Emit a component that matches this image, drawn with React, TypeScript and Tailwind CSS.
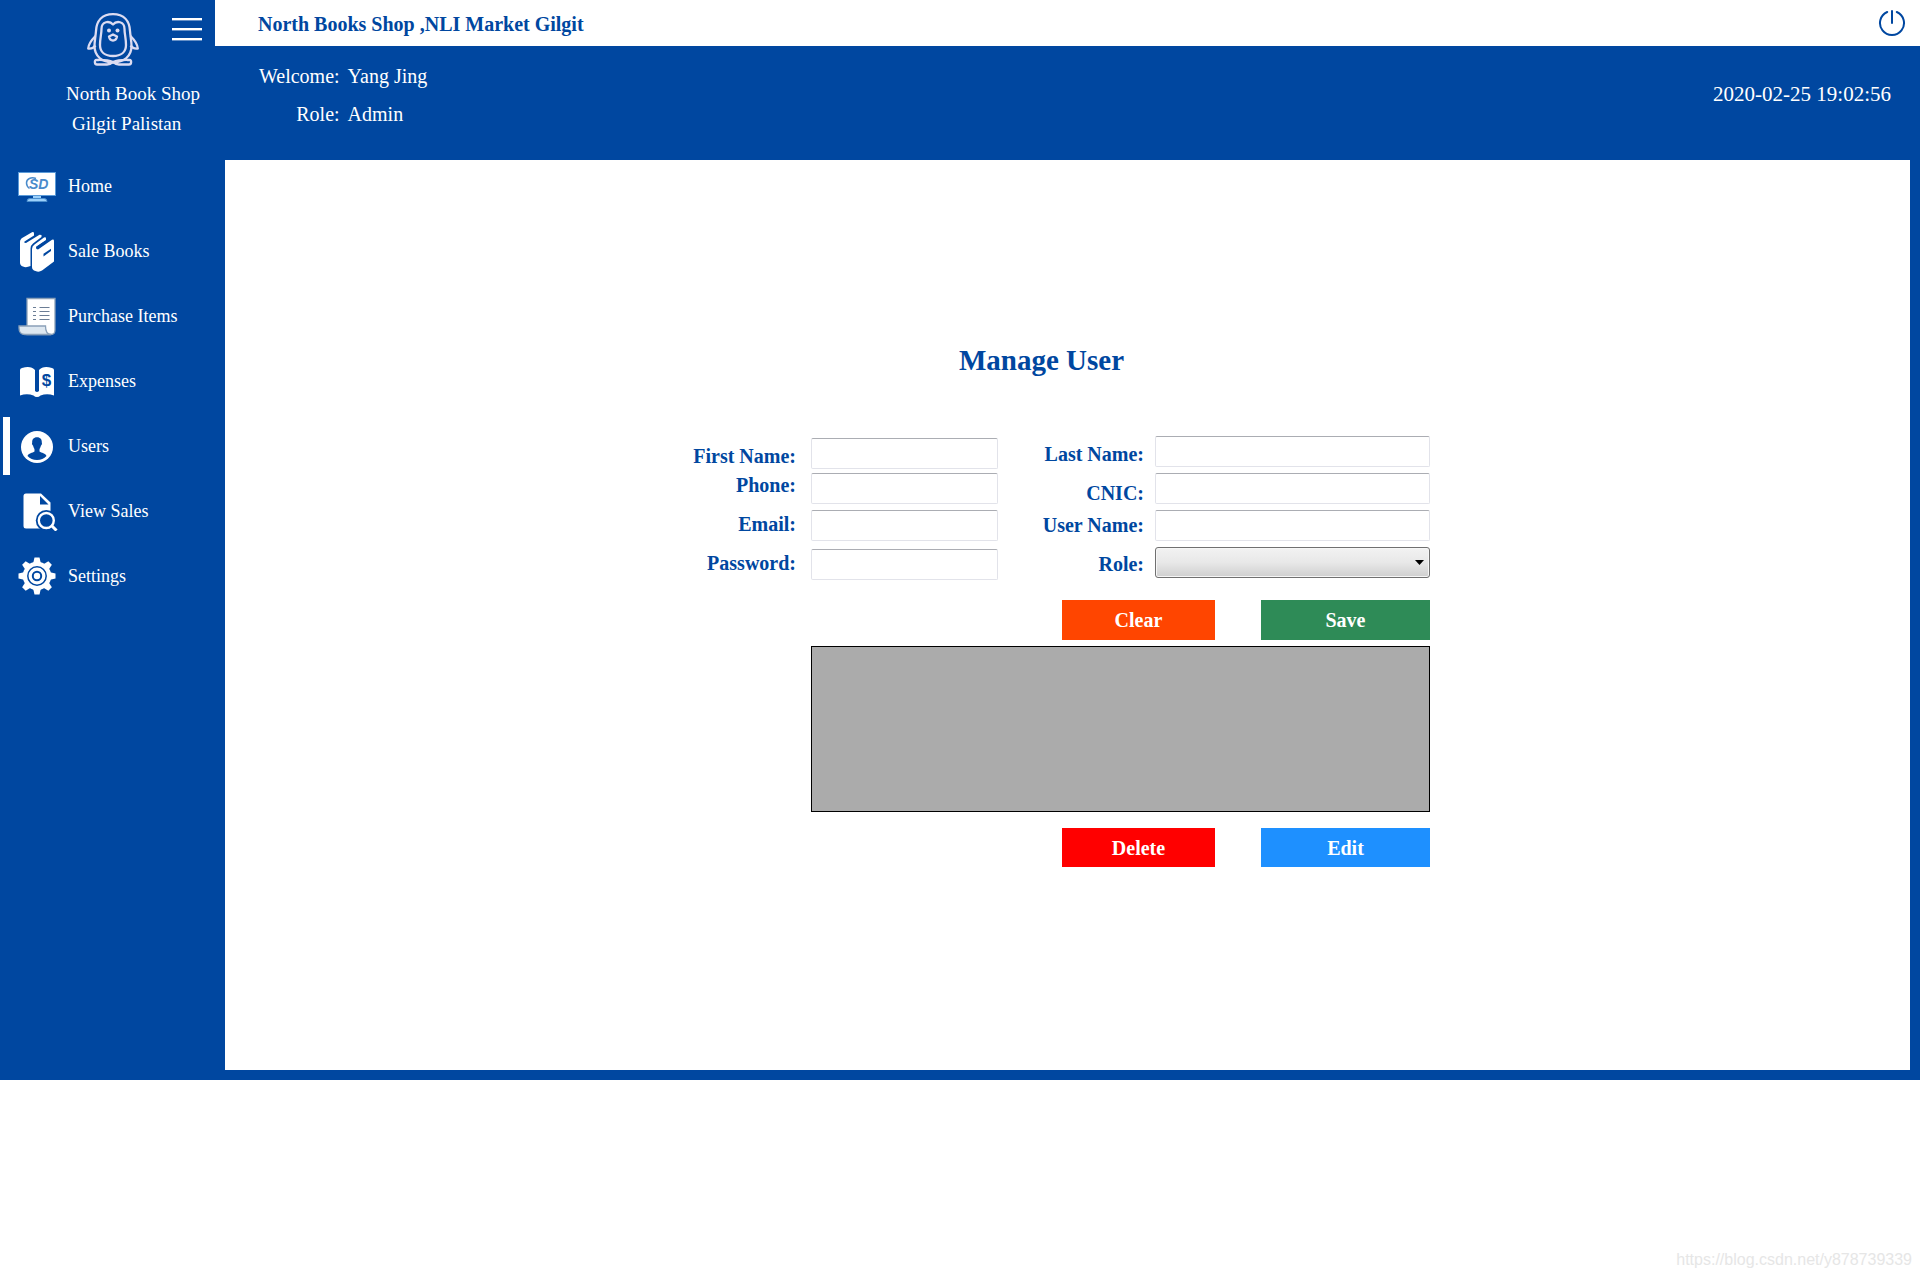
import { useState } from "react";
import type { ReactNode } from "react";

const BLUE = "#0047a0";

function PenguinLogo() {
  return (
    <svg width="52" height="53" viewBox="0 0 52 53" fill="none" stroke="#dcdcf2" strokeWidth="2.300" strokeLinejoin="round">
      <path d="M26 1.200C15 1.200 9.500 8 9 18C8.500 24 7.500 28 7.500 33C7.500 43 15 49.500 26 49.500C37 49.500 44.500 43 44.500 33C44.500 28 43.500 24 43 18C42.500 8 37 1.200 26 1.200Z" />
      <path d="M26 11.500C22.500 7.500 14.500 8 14.500 16C14.500 21 13 25 13 32C13 39 18 43 26 43C34 43 39 39 39 32C39 25 37.500 21 37.500 16C37.500 8 29.500 7.500 26 11.500Z" />
      <path d="M8.500 23C5 26.500 1.500 31 1.200 35.500C4 36 6.500 35 8.500 32.500M43.500 23C47 26.500 50.500 31 50.800 35.500C48 36 45.500 35 43.500 32.500" />
      <path d="M26 49C20 46.500 14 47 9.500 47C7 47 7.500 51.500 10 51.500H20C23 51.500 25 50 26 49C32 46.500 38 47 42.500 47C45 47 44.500 51.500 42 51.500H32C29 51.500 27 50 26 49Z" />
      <path d="M26 21.500L30 23.500C29.500 26 27.500 27.500 26 27.500C24.500 27.500 22.500 26 22 23.500Z" />
      <circle cx="22" cy="17.500" r="2" fill="#dcdcf2" stroke="none" />
      <circle cx="30.500" cy="17.500" r="2" fill="#dcdcf2" stroke="none" />
    </svg>
  );
}

function HomeIcon() {
  return (
    <svg width="38" height="38" viewBox="0 0 38 38">
      <path d="M15 28h8v4h-8z" fill="#9bd0fa" />
      <path d="M9 34.500q0-3 3-3h14q3 0 3 3z" fill="#9bd0fa" stroke="#4d90cf" />
      <rect x="0.500" y="5.500" width="37" height="23" fill="#fff" stroke="#5b9bd8" />
      <path d="M18 11.500C13 9.500 8.500 12 8.500 16C8.500 18 9.500 20 11.500 21.500" fill="none" stroke="#4a8bcb" strokeWidth="1.500" />
      <text x="11" y="21.500" fontSize="14" fontWeight="700" fontStyle="italic" fontFamily="Liberation Sans, sans-serif" fill="#4a8bcb">
        SD
      </text>
    </svg>
  );
}

function BooksIcon() {
  return (
    <svg width="38" height="42" viewBox="0 0 38 42">
      <path d="M2 12Q2 9 5 7.500L14 2.200Q16 1.500 16 3.500V5.500L6.500 11.500Q5.500 13 8 13L21.500 4.800L23.500 5V7L15 13.500Q12.500 15.500 12.500 18.500V36Q8 38 5 36.500Q2 35.500 2 32.500Z" fill="#fff" />
      <path d="M14 19Q14 16 16.500 14.500L26 7.500Q28 6.700 28 8.500V10L18.500 16.500Q17 19 20 19.500L34 9.800Q36 9 36 11V31.500L24 40.500Q21 42.500 17.500 41Q14 40 14 37Z" fill="#fff" />
      <path d="M18 17L27.500 10.800V13.500L20.500 18.500" fill={BLUE} />
      <path d="M25.500 23.800L33 18.800V21L25.500 26.500Z" fill={BLUE} />
    </svg>
  );
}

function ReceiptIcon() {
  return (
    <svg width="38" height="40" viewBox="0 0 38 40">
      <path d="M9 2.500H37V34Q37 38.500 33 38.500H9Z" fill="#fff" stroke="#8aa0b8" strokeWidth="1.300" />
      <path d="M1 30H27.500Q27.500 38.500 33 38.500H7Q1 38.500 1 32Z" fill="#dde7f0" stroke="#8aa0b8" strokeWidth="1.300" />
      <path d="M15 11.500h3M15 15.500h3M15 19.500h3M15 23.500h3M21.500 11.500h10M21.500 15.500h10M21.500 19.500h10M21.500 23.500h10" stroke="#6b7d95" strokeWidth="1.200" />
    </svg>
  );
}

function ExpensesIcon() {
  return (
    <svg width="38" height="38" viewBox="0 0 38 38">
      <path d="M2 8Q2 6.500 4 6Q13 3.500 17 8V29Q18 30 19 30Q20 30 21 29V8Q25 3.500 34 6Q36 6.500 36 8V33.500Q29 31 22.500 33.500Q21 35 19 35Q17 35 15.500 33.500Q9 31 2 33.500Z" fill="#fff" />
      <path d="M18 9h2v20h-2z" fill={BLUE} />
      <text x="28.500" y="24" textAnchor="middle" fontSize="17" fontWeight="700" fontFamily="Liberation Sans, sans-serif" fill={BLUE}>
        $
      </text>
    </svg>
  );
}

function UserIcon() {
  return (
    <svg width="38" height="38" viewBox="0 0 38 38">
      <circle cx="19" cy="20" r="16" fill="#fff" />
      <path d="M19 10.200C15.500 10.200 14 12.500 14.200 15.500C13.700 16.500 14.200 18 15 18.500C15.400 20.500 16.500 21.500 16.500 22.500V24.500C14.500 26 10.500 26 9.500 29C12 31.500 15 33 19 33C23 33 26 31.500 28.500 29C27.500 26 23.500 26 21.500 24.500V22.500C21.500 21.500 22.600 20.500 23 18.500C23.800 18 24.300 16.500 23.800 15.500C24 12.500 22.500 10.200 19 10.200Z" fill={BLUE} />
    </svg>
  );
}

function ViewSalesIcon() {
  return (
    <svg width="40" height="40" viewBox="0 0 40 40">
      <path d="M8 2.500H23L32.500 11.500V37.500H8Q5.500 37.500 5.500 35V5Q5.500 2.500 8 2.500Z" fill="#fff" />
      <path d="M22 5L30.500 13.500H22Z" fill={BLUE} />
      <circle cx="28.300" cy="29.500" r="10.500" fill={BLUE} />
      <path d="M30 36L36 40H28Z" fill={BLUE} />
      <circle cx="28.300" cy="29.500" r="7.500" fill="none" stroke="#fff" strokeWidth="2.400" />
      <path d="M33.500 34.500L38.500 39.500" stroke="#fff" strokeWidth="3" />
    </svg>
  );
}

function GearIcon() {
  const teeth = [0, 45, 90, 135, 180, 225, 270, 315];
  return (
    <svg width="38" height="38" viewBox="0 0 38 38">
      <circle cx="19" cy="19" r="14.200" fill="#fff" />
      {teeth.map((deg) => (
        <path key={deg} d="M15 7L16.500 0.500H21.500L23 7Z" fill="#fff" transform={`rotate(${deg} 19 19)`} />
      ))}
      <circle cx="19" cy="19" r="9.200" fill="none" stroke={BLUE} strokeWidth="1.500" />
      <circle cx="19" cy="19" r="4.200" fill="none" stroke={BLUE} strokeWidth="2" />
    </svg>
  );
}

function PowerIcon() {
  return (
    <svg width="28" height="28" viewBox="0 0 28 28" fill="none" stroke={BLUE} strokeWidth="2" strokeLinecap="round">
      <path d="M9.200 3A12 12 0 1 0 18.800 3" />
      <path d="M14 2V14" />
    </svg>
  );
}

const navItems: { label: string; icon: ReactNode }[] = [
  { label: "Home", icon: <HomeIcon /> },
  { label: "Sale Books", icon: <BooksIcon /> },
  { label: "Purchase Items", icon: <ReceiptIcon /> },
  { label: "Expenses", icon: <ExpensesIcon /> },
  { label: "Users", icon: <UserIcon /> },
  { label: "View Sales", icon: <ViewSalesIcon /> },
  { label: "Settings", icon: <GearIcon /> },
];

const inputClass =
  "block w-full h-[31px] px-1 rounded-[2px] border border-[#e2e3ea] border-t-[#abadb3] bg-white text-base text-black outline-none";

const barClass = "h-[3px] w-full border-b border-white/40 bg-white bg-clip-padding";

function Sidebar() {
  const [active, setActive] = useState("Users");

  return (
    <aside className="w-[215px] shrink-0 text-white">
      <div className="h-[157px]">
        <div className="flex items-start gap-[33px] pl-[87px] pt-[13px]">
          <PenguinLogo />
          <button type="button" aria-label="Toggle menu" className="mt-[5px] flex w-[30px] flex-col gap-[7px]">
            <span className={barClass} />
            <span className={barClass} />
            <span className={barClass} />
          </button>
        </div>
        <div className="mt-[13px] text-[19px] leading-[30px] whitespace-nowrap">
          <p className="pl-[66px]">North Book Shop</p>
          <p className="pl-[72px]">Gilgit Palistan</p>
        </div>
      </div>

      <nav className="flex flex-col gap-[7px] pl-[3px]">
        {navItems.map((item) => (
          <button
            key={item.label}
            type="button"
            onClick={() => setActive(item.label)}
            className={`flex h-[58px] items-center border-l-[7px] pl-2 text-left text-lg whitespace-nowrap ${
              active === item.label ? "border-white" : "border-transparent"
            }`}
          >
            <span className="flex w-[50px] shrink-0 items-center">{item.icon}</span>
            {item.label}
          </button>
        ))}
      </nav>
    </aside>
  );
}

function ManageUser() {
  return (
    <form className="mx-auto w-[753px] pr-[14px] text-xl font-bold text-[#0047a0]">
      <h1 className="pr-[38px] text-center text-[29px] leading-9">Manage User</h1>

      <div className="mt-[58px] flex items-start">
        {/* left labels + fields */}
        <div className="flex w-[105px] flex-col gap-[15px] pt-2 text-right leading-6 whitespace-nowrap">
          <div className="flex flex-col gap-[5px]">
            <label htmlFor="firstName">First Name:</label>
            <label htmlFor="phone">Phone:</label>
          </div>
          <label htmlFor="email">Email:</label>
          <label htmlFor="password">Password:</label>
        </div>
        <div className="ml-[15px] flex w-[187px] flex-col gap-1.5 pt-0.5">
          <div className="flex flex-col gap-1">
            <input id="firstName" type="text" className={inputClass} />
            <input id="phone" type="text" className={inputClass} />
          </div>
          <div className="flex flex-col gap-2">
            <input id="email" type="text" className={inputClass} />
            <input id="password" type="password" className={inputClass} />
          </div>
        </div>

        {/* right labels + fields */}
        <div className="flex flex-1 flex-col gap-2 pt-1.5 text-right leading-6 whitespace-nowrap">
          <div className="flex flex-col gap-[15px]">
            <label htmlFor="lastName">Last Name:</label>
            <label htmlFor="cnic">CNIC:</label>
          </div>
          <div className="flex flex-col gap-[15px]">
            <label htmlFor="userName">User Name:</label>
            <label htmlFor="role">Role:</label>
          </div>
        </div>
        <div className="ml-[11px] flex w-[275px] flex-col gap-1.5">
          <input id="lastName" type="text" className={inputClass} />
          <input id="cnic" type="text" className={inputClass} />
          <input id="userName" type="text" className={inputClass} />
          <div className="relative">
            <select
              id="role"
              defaultValue=""
              className="block h-[31px] w-full appearance-none rounded-[3px] border border-[#707070] bg-linear-to-b from-[#f2f2f2] from-0% via-[#e8e8e8] via-50% to-[#cfcfcf] px-2 text-base text-black shadow-[inset_0_0_0_1px_#f6f6f6] outline-none"
            >
              <option value="" />
              <option value="admin">Admin</option>
              <option value="user">User</option>
            </select>
            <svg width="9" height="5" viewBox="0 0 9 5" className="pointer-events-none absolute top-[13px] right-1.5">
              <path d="M0 0H9L4.500 5Z" fill="#000" />
            </svg>
          </div>
        </div>
      </div>

      <div className="mt-5 flex justify-end gap-[46px] text-white">
        <button type="reset" className="h-10 w-[153px] bg-[#ff4500]">Clear</button>
        <button type="button" className="h-10 w-[169px] bg-[#2e8b57]">Save</button>
      </div>

      <div className="mt-1.5 ml-[120px] h-[166px] border border-black bg-[#ababab]" />

      <div className="mt-4 flex justify-end gap-[46px] text-white">
        <button type="button" className="h-[39px] w-[153px] bg-[#ff0000]">Delete</button>
        <button type="button" className="h-[39px] w-[169px] bg-[#1e90ff]">Edit</button>
      </div>
    </form>
  );
}

export default function App() {
  return (
    <div className="flex min-h-screen flex-col bg-white font-['Liberation_Serif',serif]">
      <div className="flex bg-[#0047a0]">
        <Sidebar />

        <div className="flex min-w-0 flex-1 flex-col">
          <header className="flex h-[46px] items-center justify-between bg-white pr-[14px] pl-[43px] text-[#0047a0]">
            <p className="pt-0.5 text-xl font-bold">North Books Shop ,NLI Market Gilgit</p>
            <button type="button" aria-label="Power off">
              <PowerIcon />
            </button>
          </header>

          <div className="flex items-center justify-between pt-[11px] pr-[29px] pb-[27px] pl-11 text-white">
            <dl className="grid grid-cols-[auto_auto] gap-x-2 text-xl leading-[38px]">
              <dt className="text-right">Welcome:</dt>
              <dd>Yang Jing</dd>
              <dt className="text-right">Role:</dt>
              <dd>Admin</dd>
            </dl>
            <time className="text-[21px]">2020-02-25 19:02:56</time>
          </div>

          <main className="mr-2.5 mb-2.5 ml-2.5 min-h-[910px] bg-white pt-[182px]">
            <ManageUser />
          </main>
        </div>
      </div>

      <footer className="flex flex-1 items-end justify-end pr-2 pb-2 font-['Liberation_Sans',sans-serif] text-base text-[#e6e6e6]">
        https://blog.csdn.net/y878739339
      </footer>
    </div>
  );
}
